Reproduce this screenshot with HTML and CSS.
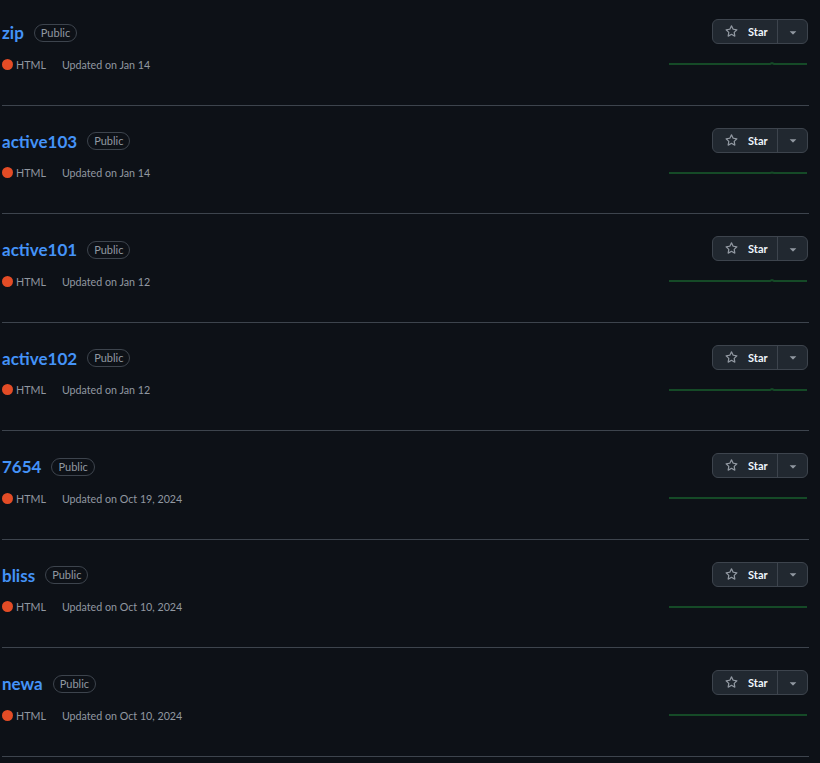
FILE: index.html
```html
<!DOCTYPE html>
<html lang="en">
<head>
<meta charset="utf-8">
<title>Repositories</title>
<link rel="stylesheet" href="styles.css">
</head>
<body>
<ul class="repo-list">
  <li class="repo">
    <div class="repo-main">
      <h3 class="repo-title"><a class="repo-name" href="#">zip</a><span class="label">Public</span></h3>
      <div class="repo-meta"><span class="lang-dot"></span><span class="lang">HTML</span><span class="updated">Updated on Jan 14</span></div>
    </div>
    <div class="repo-side">
      <div class="star-btn"><button class="star-main"><svg class="star-icon" viewBox="0 0 16 16"><path d="M8 .25a.75.75 0 0 1 .673.418l1.882 3.815 4.21.612a.75.75 0 0 1 .416 1.279l-3.046 2.97.719 4.192a.751.751 0 0 1-1.088.791L8 12.347l-3.766 1.98a.75.75 0 0 1-1.088-.79l.72-4.194L.818 6.374a.75.75 0 0 1 .416-1.28l4.21-.611L7.327.668A.75.75 0 0 1 8 .25Zm0 2.445L6.615 5.5a.75.75 0 0 1-.564.41l-3.097.45 2.24 2.184a.75.75 0 0 1 .216.664l-.528 3.084 2.769-1.456a.75.75 0 0 1 .698 0l2.77 1.456-.53-3.084a.75.75 0 0 1 .216-.664l2.24-2.183-3.096-.45a.75.75 0 0 1-.564-.41L8 2.694Z"/></svg><span>Star</span></button><button class="star-drop"><svg class="caret" viewBox="0 0 16 16"><path d="m4.427 7.427 3.396 3.396a.25.25 0 0 0 .354 0l3.396-3.396A.25.25 0 0 0 11.396 7H4.604a.25.25 0 0 0-.177.427Z"/></svg></button></div>
      <svg class="spark" viewBox="0 0 138 27"><polyline points="0,8 101,8 103,7 105,8 138,8"/></svg>
    </div>
  </li>
  <li class="repo">
    <div class="repo-main">
      <h3 class="repo-title"><a class="repo-name" href="#">active103</a><span class="label">Public</span></h3>
      <div class="repo-meta"><span class="lang-dot"></span><span class="lang">HTML</span><span class="updated">Updated on Jan 14</span></div>
    </div>
    <div class="repo-side">
      <div class="star-btn"><button class="star-main"><svg class="star-icon" viewBox="0 0 16 16"><path d="M8 .25a.75.75 0 0 1 .673.418l1.882 3.815 4.21.612a.75.75 0 0 1 .416 1.279l-3.046 2.97.719 4.192a.751.751 0 0 1-1.088.791L8 12.347l-3.766 1.98a.75.75 0 0 1-1.088-.79l.72-4.194L.818 6.374a.75.75 0 0 1 .416-1.28l4.21-.611L7.327.668A.75.75 0 0 1 8 .25Zm0 2.445L6.615 5.5a.75.75 0 0 1-.564.41l-3.097.45 2.24 2.184a.75.75 0 0 1 .216.664l-.528 3.084 2.769-1.456a.75.75 0 0 1 .698 0l2.77 1.456-.53-3.084a.75.75 0 0 1 .216-.664l2.24-2.183-3.096-.45a.75.75 0 0 1-.564-.41L8 2.694Z"/></svg><span>Star</span></button><button class="star-drop"><svg class="caret" viewBox="0 0 16 16"><path d="m4.427 7.427 3.396 3.396a.25.25 0 0 0 .354 0l3.396-3.396A.25.25 0 0 0 11.396 7H4.604a.25.25 0 0 0-.177.427Z"/></svg></button></div>
      <svg class="spark" viewBox="0 0 138 27"><polyline points="0,8 101,8 103,7.5 105,8 138,8"/></svg>
    </div>
  </li>
  <li class="repo">
    <div class="repo-main">
      <h3 class="repo-title"><a class="repo-name" href="#">active101</a><span class="label">Public</span></h3>
      <div class="repo-meta"><span class="lang-dot"></span><span class="lang">HTML</span><span class="updated">Updated on Jan 12</span></div>
    </div>
    <div class="repo-side">
      <div class="star-btn"><button class="star-main"><svg class="star-icon" viewBox="0 0 16 16"><path d="M8 .25a.75.75 0 0 1 .673.418l1.882 3.815 4.21.612a.75.75 0 0 1 .416 1.279l-3.046 2.97.719 4.192a.751.751 0 0 1-1.088.791L8 12.347l-3.766 1.98a.75.75 0 0 1-1.088-.79l.72-4.194L.818 6.374a.75.75 0 0 1 .416-1.28l4.21-.611L7.327.668A.75.75 0 0 1 8 .25Zm0 2.445L6.615 5.5a.75.75 0 0 1-.564.41l-3.097.45 2.24 2.184a.75.75 0 0 1 .216.664l-.528 3.084 2.769-1.456a.75.75 0 0 1 .698 0l2.77 1.456-.53-3.084a.75.75 0 0 1 .216-.664l2.24-2.183-3.096-.45a.75.75 0 0 1-.564-.41L8 2.694Z"/></svg><span>Star</span></button><button class="star-drop"><svg class="caret" viewBox="0 0 16 16"><path d="m4.427 7.427 3.396 3.396a.25.25 0 0 0 .354 0l3.396-3.396A.25.25 0 0 0 11.396 7H4.604a.25.25 0 0 0-.177.427Z"/></svg></button></div>
      <svg class="spark" viewBox="0 0 138 27"><polyline points="0,8 101,8 103,7 105,8 138,8"/></svg>
    </div>
  </li>
  <li class="repo">
    <div class="repo-main">
      <h3 class="repo-title"><a class="repo-name" href="#">active102</a><span class="label">Public</span></h3>
      <div class="repo-meta"><span class="lang-dot"></span><span class="lang">HTML</span><span class="updated">Updated on Jan 12</span></div>
    </div>
    <div class="repo-side">
      <div class="star-btn"><button class="star-main"><svg class="star-icon" viewBox="0 0 16 16"><path d="M8 .25a.75.75 0 0 1 .673.418l1.882 3.815 4.21.612a.75.75 0 0 1 .416 1.279l-3.046 2.97.719 4.192a.751.751 0 0 1-1.088.791L8 12.347l-3.766 1.98a.75.75 0 0 1-1.088-.79l.72-4.194L.818 6.374a.75.75 0 0 1 .416-1.28l4.21-.611L7.327.668A.75.75 0 0 1 8 .25Zm0 2.445L6.615 5.5a.75.75 0 0 1-.564.41l-3.097.45 2.24 2.184a.75.75 0 0 1 .216.664l-.528 3.084 2.769-1.456a.75.75 0 0 1 .698 0l2.77 1.456-.53-3.084a.75.75 0 0 1 .216-.664l2.24-2.183-3.096-.45a.75.75 0 0 1-.564-.41L8 2.694Z"/></svg><span>Star</span></button><button class="star-drop"><svg class="caret" viewBox="0 0 16 16"><path d="m4.427 7.427 3.396 3.396a.25.25 0 0 0 .354 0l3.396-3.396A.25.25 0 0 0 11.396 7H4.604a.25.25 0 0 0-.177.427Z"/></svg></button></div>
      <svg class="spark" viewBox="0 0 138 27"><polyline points="0,8 101,8 103,7 105,8 138,8"/></svg>
    </div>
  </li>
  <li class="repo">
    <div class="repo-main">
      <h3 class="repo-title"><a class="repo-name" href="#">7654</a><span class="label">Public</span></h3>
      <div class="repo-meta"><span class="lang-dot"></span><span class="lang">HTML</span><span class="updated">Updated on Oct 19, 2024</span></div>
    </div>
    <div class="repo-side">
      <div class="star-btn"><button class="star-main"><svg class="star-icon" viewBox="0 0 16 16"><path d="M8 .25a.75.75 0 0 1 .673.418l1.882 3.815 4.21.612a.75.75 0 0 1 .416 1.279l-3.046 2.97.719 4.192a.751.751 0 0 1-1.088.791L8 12.347l-3.766 1.98a.75.75 0 0 1-1.088-.79l.72-4.194L.818 6.374a.75.75 0 0 1 .416-1.28l4.21-.611L7.327.668A.75.75 0 0 1 8 .25Zm0 2.445L6.615 5.5a.75.75 0 0 1-.564.41l-3.097.45 2.24 2.184a.75.75 0 0 1 .216.664l-.528 3.084 2.769-1.456a.75.75 0 0 1 .698 0l2.77 1.456-.53-3.084a.75.75 0 0 1 .216-.664l2.24-2.183-3.096-.45a.75.75 0 0 1-.564-.41L8 2.694Z"/></svg><span>Star</span></button><button class="star-drop"><svg class="caret" viewBox="0 0 16 16"><path d="m4.427 7.427 3.396 3.396a.25.25 0 0 0 .354 0l3.396-3.396A.25.25 0 0 0 11.396 7H4.604a.25.25 0 0 0-.177.427Z"/></svg></button></div>
      <svg class="spark" viewBox="0 0 138 27"><polyline points="0,8 138,8"/></svg>
    </div>
  </li>
  <li class="repo">
    <div class="repo-main">
      <h3 class="repo-title"><a class="repo-name" href="#">bliss</a><span class="label">Public</span></h3>
      <div class="repo-meta"><span class="lang-dot"></span><span class="lang">HTML</span><span class="updated">Updated on Oct 10, 2024</span></div>
    </div>
    <div class="repo-side">
      <div class="star-btn"><button class="star-main"><svg class="star-icon" viewBox="0 0 16 16"><path d="M8 .25a.75.75 0 0 1 .673.418l1.882 3.815 4.21.612a.75.75 0 0 1 .416 1.279l-3.046 2.97.719 4.192a.751.751 0 0 1-1.088.791L8 12.347l-3.766 1.98a.75.75 0 0 1-1.088-.79l.72-4.194L.818 6.374a.75.75 0 0 1 .416-1.28l4.21-.611L7.327.668A.75.75 0 0 1 8 .25Zm0 2.445L6.615 5.5a.75.75 0 0 1-.564.41l-3.097.45 2.24 2.184a.75.75 0 0 1 .216.664l-.528 3.084 2.769-1.456a.75.75 0 0 1 .698 0l2.77 1.456-.53-3.084a.75.75 0 0 1 .216-.664l2.24-2.183-3.096-.45a.75.75 0 0 1-.564-.41L8 2.694Z"/></svg><span>Star</span></button><button class="star-drop"><svg class="caret" viewBox="0 0 16 16"><path d="m4.427 7.427 3.396 3.396a.25.25 0 0 0 .354 0l3.396-3.396A.25.25 0 0 0 11.396 7H4.604a.25.25 0 0 0-.177.427Z"/></svg></button></div>
      <svg class="spark" viewBox="0 0 138 27"><polyline points="0,8 138,8"/></svg>
    </div>
  </li>
  <li class="repo">
    <div class="repo-main">
      <h3 class="repo-title"><a class="repo-name" href="#">newa</a><span class="label">Public</span></h3>
      <div class="repo-meta"><span class="lang-dot"></span><span class="lang">HTML</span><span class="updated">Updated on Oct 10, 2024</span></div>
    </div>
    <div class="repo-side">
      <div class="star-btn"><button class="star-main"><svg class="star-icon" viewBox="0 0 16 16"><path d="M8 .25a.75.75 0 0 1 .673.418l1.882 3.815 4.21.612a.75.75 0 0 1 .416 1.279l-3.046 2.97.719 4.192a.751.751 0 0 1-1.088.791L8 12.347l-3.766 1.98a.75.75 0 0 1-1.088-.79l.72-4.194L.818 6.374a.75.75 0 0 1 .416-1.28l4.21-.611L7.327.668A.75.75 0 0 1 8 .25Zm0 2.445L6.615 5.5a.75.75 0 0 1-.564.41l-3.097.45 2.24 2.184a.75.75 0 0 1 .216.664l-.528 3.084 2.769-1.456a.75.75 0 0 1 .698 0l2.77 1.456-.53-3.084a.75.75 0 0 1 .216-.664l2.24-2.183-3.096-.45a.75.75 0 0 1-.564-.41L8 2.694Z"/></svg><span>Star</span></button><button class="star-drop"><svg class="caret" viewBox="0 0 16 16"><path d="m4.427 7.427 3.396 3.396a.25.25 0 0 0 .354 0l3.396-3.396A.25.25 0 0 0 11.396 7H4.604a.25.25 0 0 0-.177.427Z"/></svg></button></div>
      <svg class="spark" viewBox="0 0 138 27"><polyline points="0,8 138,8"/></svg>
    </div>
  </li>
</ul>
</body>
</html>
```

FILE: styles.css
```css
html, body {
  margin: 0;
  padding: 0;
  background: #0d1117;
  overflow: hidden;
}

body {
  font-family: Lato, "Liberation Sans", sans-serif;
  color: #f0f6fc;
}

.repo-list {
  list-style: none;
  margin: -2.5px 0 0 2px;
  padding: 0;
  width: 807px;
}

.repo {
  display: flex;
  justify-content: space-between;
  padding: 21.6px 0;
  border-bottom: 1px solid #3d444d;
  height: 64.3px;
}

.repo-main {
  display: flex;
  flex-direction: column;
}

.repo-title {
  display: flex;
  align-items: center;
  margin: 0;
  height: 27px;
  font-size: 17px;
  font-weight: 700;
  line-height: 27px;
}

.repo-name {
  color: #4493f8;
  text-decoration: none;
}

.label {
  display: inline-block;
  margin-left: 10px;
  padding: 0 6px;
  height: 16px;
  line-height: 16px;
  border: 1px solid #3d444d;
  border-radius: 10px;
  font-size: 11px;
  font-weight: 400;
  color: #9198a1;
}

.repo-meta {
  display: flex;
  align-items: center;
  margin-top: 10.3px;
  height: 16.2px;
  font-size: 10.7px;
  color: #9198a1;
}

.lang-dot {
  width: 11px;
  height: 11px;
  border-radius: 50%;
  background: #e34c26;
  margin-right: 3px;
}

.lang {
  margin-right: 16px;
}

.repo-side {
  display: flex;
  flex-direction: column;
  align-items: flex-end;
  justify-content: space-between;
  margin-right: 1px;
}

.star-btn {
  display: flex;
  height: 25px;
  box-sizing: border-box;
  border: 1px solid #3d444d;
  border-radius: 6px;
  background: #212830;
  overflow: hidden;
}

.star-btn button {
  display: flex;
  align-items: center;
  border: 0;
  margin: 0;
  background: transparent;
  font-family: inherit;
  color: #f0f6fc;
  cursor: pointer;
}

.star-main {
  width: 65px;
  padding: 0 0 0 12px;
  gap: 10px;
  font-size: 11px;
  font-weight: 700;
  border-right: 1px solid #3d444d !important;
}

.star-icon {
  width: 13px;
  height: 13px;
  fill: #9198a1;
}

.star-drop {
  width: 29px;
  justify-content: center;
  padding: 0;
}

.caret {
  width: 14px;
  height: 14px;
  fill: #9198a1;
}

.spark {
  width: 138px;
  height: 27px;
  display: block;
  margin-right: 1px;
}

.spark polyline {
  fill: none;
  stroke: #154a27;
  stroke-width: 2;
}
```
